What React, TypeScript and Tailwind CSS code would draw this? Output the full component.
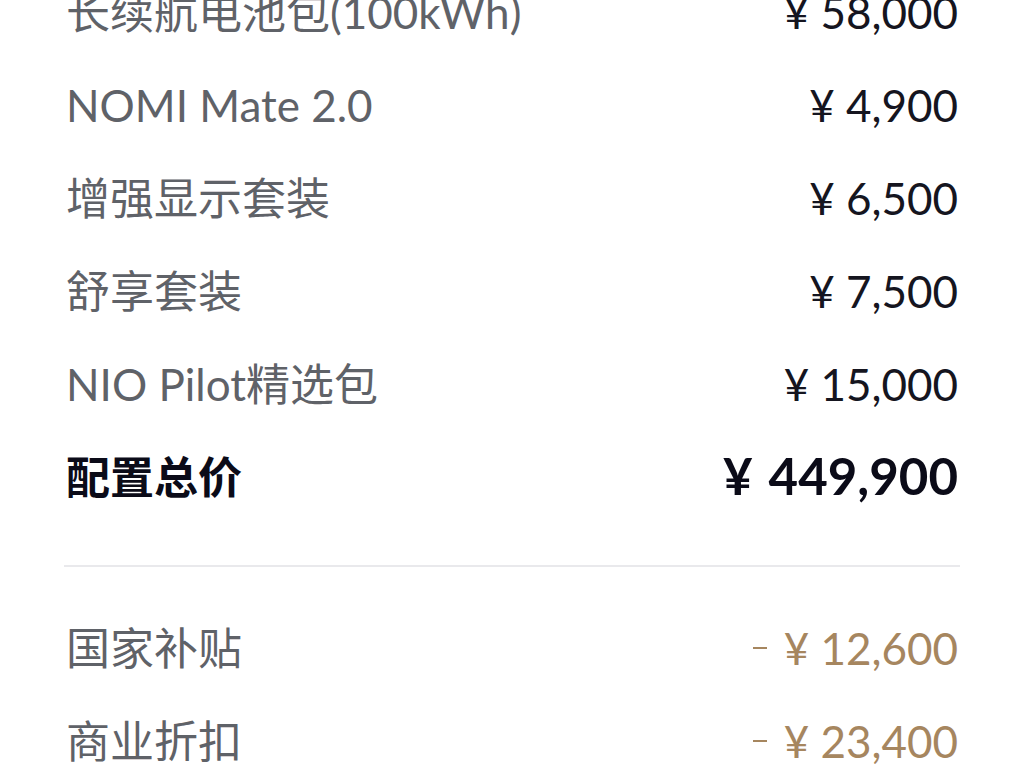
const items = [
  { label: "长续航电池包(100kWh)", price: "¥ 58,000" },
  { label: "NOMI Mate 2.0", price: "¥ 4,900" },
  { label: "增强显示套装", price: "¥ 6,500" },
  { label: "舒享套装", price: "¥ 7,500" },
  { label: "NIO Pilot精选包", price: "¥ 15,000" },
];

const discounts = [
  { label: "国家补贴", price: "¥ 12,600" },
  { label: "商业折扣", price: "¥ 23,400" },
];

export default function App() {
  return (
    <div className="h-[768px] w-[1024px] overflow-hidden bg-white font-['Lato','Noto_Sans_CJK_SC',sans-serif] text-[44px]">
      <div className="-mt-[35px] px-[66px]">
        {items.map((item) => (
          <div key={item.label} className="flex h-[93px] items-center justify-between">
            <span className="text-[#5f6268]">{item.label}</span>
            <span className="text-[#15151f]">{item.price}</span>
          </div>
        ))}
        <div className="flex h-[93px] items-center justify-between font-bold text-[#0b0b18]">
          <span>配置总价</span>
          <span className="text-[51px]">
            <span className="mr-[16px]">¥</span>449,900
          </span>
        </div>
      </div>
      <div className="mx-[64px] mt-[42px] h-[2px] bg-[#e9e9ec]" />
      <div className="mt-[34px] px-[66px]">
        {discounts.map((item) => (
          <div key={item.label} className="flex h-[93px] items-center justify-between">
            <span className="text-[#5f6268]">{item.label}</span>
            <span className="flex items-center text-[#a6865f]">
              <span className="mr-[17px] h-[2px] w-[14px] bg-[#a6865f]" />
              {item.price}
            </span>
          </div>
        ))}
      </div>
    </div>
  );
}
